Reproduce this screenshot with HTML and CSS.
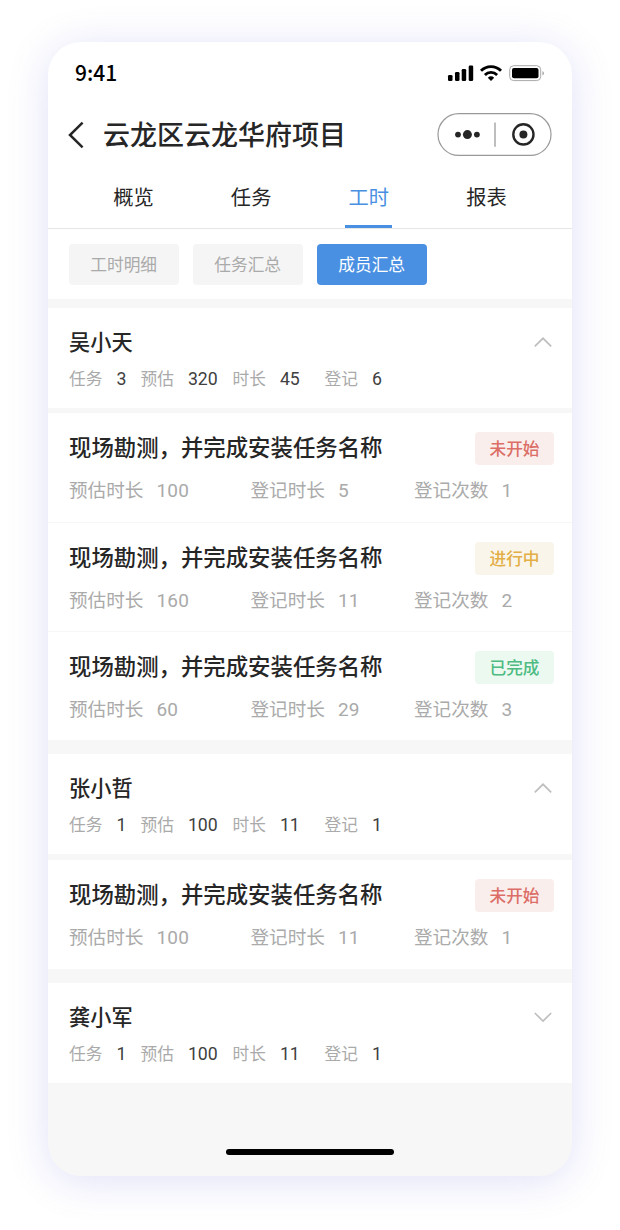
FILE: index.html
```html
<!DOCTYPE html>
<html lang="zh-CN">
<head>
    <meta charset="UTF-8">
    <title>云龙区云龙华府项目</title>
    <link rel="stylesheet" href="styles.css">
</head>
<body>
<div class="phone">
    <div class="status_bar">
        <span class="time">9:41</span>
        <svg width="98" height="20" viewBox="0 0 98 20">
            <rect x="1" y="12" width="4.5" height="6" rx="1.3"/>
            <rect x="8" y="9" width="4.5" height="9" rx="1.3"/>
            <rect x="14.7" y="6" width="4.5" height="12" rx="1.3"/>
            <rect x="21.7" y="2.5" width="4.5" height="15.5" rx="1.3"/>
            <g fill="none" stroke="#000" stroke-width="2.8">
                <path d="M34 7.8a14 14 0 0 1 20 0"/>
                <path d="M37.9 12a8.6 8.6 0 0 1 12.2 0"/>
            </g>
            <path d="M40.8 14.7a4.8 4.8 0 0 1 6.4 0L44 17.9z"/>
            <rect x="62.7" y="2.7" width="31" height="14.9" rx="4" fill="none" stroke="#a9a9a9"/>
            <rect x="65" y="5" width="26.5" height="10.3" rx="2"/>
            <path d="M95.5 8v4.6q1.4-.8 1.4-2.3t-1.4-2.3z" fill="#a0a0a0"/>
        </svg>
    </div>
    <header>
        <svg class="back" width="18" height="28" viewBox="0 0 18 28">
            <path d="M15.6 1.6L3 14l12.6 12.4" fill="none" stroke="#262626" stroke-width="2.5"/>
        </svg>
        <h1>云龙区云龙华府项目</h1>
        <svg class="capsule" width="115" height="44" viewBox="0 0 115 44">
            <rect x="1" y=".7" width="113" height="41.7" rx="20.8" fill="#fff" stroke="#999" stroke-width="1.2"/>
            <circle cx="21" cy="21.6" r="2.9"/>
            <circle cx="30.4" cy="21.6" r="4.5"/>
            <circle cx="39.9" cy="21.6" r="2.9"/>
            <path d="M58 9.4v24.4" stroke="#a3a3a3" stroke-width="1.4"/>
            <circle cx="86.4" cy="21.4" r="10.1" fill="none" stroke="#262626" stroke-width="2.4"/>
            <circle cx="86.4" cy="21.4" r="4"/>
        </svg>
    </header>
    <nav>
        <a class="tab"><span>概览</span></a>
        <a class="tab"><span>任务</span></a>
        <a class="tab active"><span>工时</span></a>
        <a class="tab"><span>报表</span></a>
    </nav>
    <div class="filters">
        <button>工时明细</button>
        <button>任务汇总</button>
        <button class="active">成员汇总</button>
    </div>

    <main>
        <section class="member">
            <div class="member_head">
                <h2>吴小天</h2>
                <svg class="arrow" width="20" height="12" viewBox="0 0 20 12"><path d="M1.8 10.3L10 2.3l8.2 8"/></svg>
                <div class="totals">
                    <span>任务<b>3</b></span>
                    <span>预估<b>320</b></span>
                    <span>时长<b>45</b></span>
                    <span>登记<b>6</b></span>
                </div>
            </div>
            <div class="task">
                <div class="task_title"><h3>现场勘测，并完成安装任务名称</h3><span class="badge todo">未开始</span></div>
                <div class="task_info">
                    <span>预估时长<i>100</i></span>
                    <span>登记时长<i>5</i></span>
                    <span>登记次数<i>1</i></span>
                </div>
            </div>
            <div class="task">
                <div class="task_title"><h3>现场勘测，并完成安装任务名称</h3><span class="badge doing">进行中</span></div>
                <div class="task_info">
                    <span>预估时长<i>160</i></span>
                    <span>登记时长<i>11</i></span>
                    <span>登记次数<i>2</i></span>
                </div>
            </div>
            <div class="task">
                <div class="task_title"><h3>现场勘测，并完成安装任务名称</h3><span class="badge done">已完成</span></div>
                <div class="task_info">
                    <span>预估时长<i>60</i></span>
                    <span>登记时长<i>29</i></span>
                    <span>登记次数<i>3</i></span>
                </div>
            </div>
        </section>

        <section class="member">
            <div class="member_head">
                <h2>张小哲</h2>
                <svg class="arrow" width="20" height="12" viewBox="0 0 20 12"><path d="M1.8 10.3L10 2.3l8.2 8"/></svg>
                <div class="totals">
                    <span>任务<b>1</b></span>
                    <span>预估<b>100</b></span>
                    <span>时长<b>11</b></span>
                    <span>登记<b>1</b></span>
                </div>
            </div>
            <div class="task">
                <div class="task_title"><h3>现场勘测，并完成安装任务名称</h3><span class="badge todo">未开始</span></div>
                <div class="task_info">
                    <span>预估时长<i>100</i></span>
                    <span>登记时长<i>11</i></span>
                    <span>登记次数<i>1</i></span>
                </div>
            </div>
        </section>

        <section class="member">
            <div class="member_head">
                <h2>龚小军</h2>
                <svg class="arrow" width="20" height="12" viewBox="0 0 20 12"><path d="M1.8 2L10 10l8.2-8"/></svg>
                <div class="totals">
                    <span>任务<b>1</b></span>
                    <span>预估<b>100</b></span>
                    <span>时长<b>11</b></span>
                    <span>登记<b>1</b></span>
                </div>
            </div>
        </section>
    </main>
    <div class="home_bar"></div>
</div>
</body>
</html>
```
FILE: styles.css
```css
:root {
    --clr-blue: #4a90e2;
    --clr-text: #262626;
    --clr-grey: #aaa;
    --clr-bg: #f7f7f7;
}

*, *::before, *::after {
    margin: 0;
    padding: 0;
    box-sizing: border-box;
}

body {
    font-family: "Noto Sans CJK SC", sans-serif;
    background-color: #fff;
    color: var(--clr-text);
    padding-top: 42px;
    min-height: 1230px;
}

.phone {
    width: 524px;
    height: 1134px;
    margin: 0 auto;
    border-radius: 33px;
    overflow: hidden;
    background-color: var(--clr-bg);
    box-shadow: 0 5px 42px rgba(100, 100, 220, 0.2);
    display: flex;
    flex-direction: column;
}

.status_bar {
    height: 62px;
    padding: 0 27px;
    background-color: #fff;
    display: flex;
    justify-content: space-between;
    align-items: center;
}

.time {
    padding-bottom: 2px;
    font-size: 21px;
    font-weight: 500;
    line-height: 30px;
    color: #000;
}

header {
    height: 62px;
    padding: 0 20px 0 19px;
    background-color: #fff;
    display: flex;
    align-items: center;
}

header h1 {
    margin-left: 18px;
    padding-bottom: 2px;
    flex: 1;
    font-size: 27px;
    font-weight: 500;
    line-height: 40px;
}

.capsule {
    fill: var(--clr-text);
}

nav {
    height: 63px;
    padding: 0 26.6px;
    background-color: #fff;
    border-bottom: 1px solid #e6e6e6;
    display: grid;
    grid-template-columns: repeat(4, 1fr);
}

.tab {
    display: flex;
    justify-content: center;
    font-size: 20.3px;
    line-height: 61px;
}

.tab span {
    width: 47px;
    height: 62px;
    text-align: center;
}

.tab.active span {
    color: var(--clr-blue);
    border-bottom: 3px solid var(--clr-blue);
}

.filters {
    height: 70px;
    padding: 14.5px 20.7px;
    background-color: #fff;
    display: flex;
    gap: 14px;
}

.filters button {
    width: 110px;
    height: 41px;
    border: none;
    border-radius: 4px;
    background-color: #f5f5f5;
    color: var(--clr-grey);
    font-family: inherit;
    font-size: 16.7px;
}

.filters button.active {
    background-color: var(--clr-blue);
    color: #fff;
}

main {
    padding-top: 9px;
    display: flex;
    flex-direction: column;
    gap: 14px;
}

.member_head {
    height: 100px;
    padding: 18px 19px 0 21px;
    background-color: #fff;
    display: grid;
    grid-template-columns: 1fr auto;
    grid-template-rows: 32px 24px;
    row-gap: 8px;
    align-items: center;
}

.member_head + .task {
    margin-top: 5px;
}

.member + .member .member_head + .task {
    margin-top: 6px;
}

.member_head h2 {
    align-self: start;
    font-size: 21.2px;
    font-weight: 500;
    line-height: 30px;
}

.arrow {
    fill: none;
    stroke: #bfbfbf;
    stroke-width: 1.7;
}

.totals {
    grid-column: 1 / 3;
    display: grid;
    grid-template-columns: 71.5px 92px 92px 1fr;
    font-size: 16.7px;
    line-height: 24px;
    color: var(--clr-grey);
}

.totals b {
    margin-left: 14px;
    font-family: Roboto, sans-serif;
    font-size: 17.7px;
    font-weight: 400;
    color: #404040;
}

.task {
    height: 109px;
    padding: 18.5px 18px 0 21px;
    background-color: #fff;
}

.task + .task {
    border-top: 1px solid #f7f7f7;
}

.task_title {
    height: 34px;
    display: flex;
    justify-content: space-between;
    align-items: center;
}

.task_title h3 {
    align-self: flex-start;
    font-size: 22.4px;
    font-weight: 500;
    line-height: 29px;
}

.badge {
    width: 79px;
    border-radius: 4px;
    font-size: 16.7px;
    font-weight: 500;
    line-height: 33px;
    text-align: center;
}

.badge.todo {
    background-color: #faeeed;
    color: #dc6e67;
}

.badge.doing {
    background-color: #faf5ea;
    color: #e2ae45;
}

.badge.done {
    background-color: #ebf9f1;
    color: #4dbb82;
}

.task_info {
    margin-top: 9px;
    display: grid;
    grid-template-columns: 181.5px 163.5px 1fr;
    font-size: 18.6px;
    line-height: 28px;
    color: var(--clr-grey);
}

.task_info i {
    margin-left: 13px;
    font-family: Roboto, sans-serif;
    font-size: 19px;
    font-style: normal;
    letter-spacing: .3px;
}

.home_bar {
    width: 168px;
    height: 6px;
    margin: auto auto 21px;
    border-radius: 3px;
    background-color: #000;
}
```
